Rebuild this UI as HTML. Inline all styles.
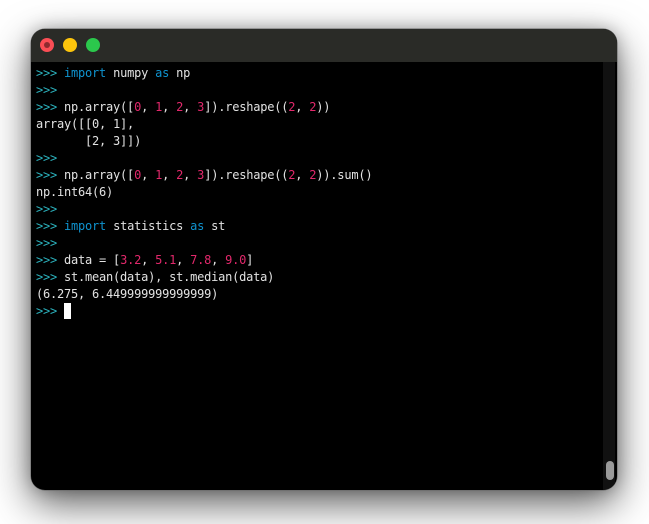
<!DOCTYPE html>
<html>
<head>
<meta charset="utf-8">
<style>
html,body{margin:0;padding:0;background:#fff;}
body{width:649px;height:524px;position:relative;overflow:hidden;}
#win{position:absolute;left:31px;top:29px;width:586px;height:461px;border-radius:14px;background:#000;overflow:hidden;
box-shadow:0 0 0 .5px #666;}
#shadow{position:absolute;left:31px;top:29px;width:586px;height:461px;border-radius:14px;box-shadow:0 14px 40px rgba(0,0,0,.62),0 0 16px rgba(0,0,0,.25);}
#bar{position:absolute;left:0;top:0;width:586px;height:33px;background:#2a2b27;}
.d{position:absolute;top:9px;width:14px;height:14px;border-radius:50%;}
#track{position:absolute;left:572px;top:33px;width:12px;height:428px;background:#111;}
#thumb{position:absolute;left:575px;top:432px;width:8px;height:19px;border-radius:4px;background:#9a9a9a;}
#text{position:absolute;left:36px;top:0;font-family:"DejaVu Sans Mono","Liberation Mono",monospace;font-size:12px;letter-spacing:-.22px;color:#e2e2e2;white-space:pre;filter:blur(.3px);}
#text div{position:absolute;left:0;height:17px;line-height:17px;}
.p{color:#2cb4bf;}.k{color:#0f93cf;}.n{color:#e2286b;}
#cur{position:absolute;left:64px;top:303px;width:7px;height:16px;background:#fff;}
</style>
</head>
<body>
<div id="shadow"></div>
<div id="win">
<div id="bar">
<div class="d" style="left:9px;background:#fb4e55;"><div style="position:absolute;left:4px;top:4px;width:6px;height:6px;border-radius:50%;background:#8e2a2e;"></div></div>
<div class="d" style="left:32px;background:#fdc50c;"></div>
<div class="d" style="left:55px;background:#2bc84c;"></div>
</div>
<div id="track"></div>
<div id="thumb"></div>
</div>
<div id="text">
<div style="top:65px"><span class="p">&gt;&gt;&gt;</span> <span class="k">import</span> numpy <span class="k">as</span> np</div>
<div style="top:82px"><span class="p">&gt;&gt;&gt;</span></div>
<div style="top:99px"><span class="p">&gt;&gt;&gt;</span> np.array([<span class="n">0</span>, <span class="n">1</span>, <span class="n">2</span>, <span class="n">3</span>]).reshape((<span class="n">2</span>, <span class="n">2</span>))</div>
<div style="top:116px">array([[0, 1],</div>
<div style="top:133px">       [2, 3]])</div>
<div style="top:150px"><span class="p">&gt;&gt;&gt;</span></div>
<div style="top:167px"><span class="p">&gt;&gt;&gt;</span> np.array([<span class="n">0</span>, <span class="n">1</span>, <span class="n">2</span>, <span class="n">3</span>]).reshape((<span class="n">2</span>, <span class="n">2</span>)).sum()</div>
<div style="top:184px">np.int64(6)</div>
<div style="top:201px"><span class="p">&gt;&gt;&gt;</span></div>
<div style="top:218px"><span class="p">&gt;&gt;&gt;</span> <span class="k">import</span> statistics <span class="k">as</span> st</div>
<div style="top:235px"><span class="p">&gt;&gt;&gt;</span></div>
<div style="top:252px"><span class="p">&gt;&gt;&gt;</span> data = [<span class="n">3.2</span>, <span class="n">5.1</span>, <span class="n">7.8</span>, <span class="n">9.0</span>]</div>
<div style="top:269px"><span class="p">&gt;&gt;&gt;</span> st.mean(data), st.median(data)</div>
<div style="top:286px">(6.275, 6.449999999999999)</div>
<div style="top:303px"><span class="p">&gt;&gt;&gt;</span></div>
</div>
<div id="cur"></div>
</body>
</html>
